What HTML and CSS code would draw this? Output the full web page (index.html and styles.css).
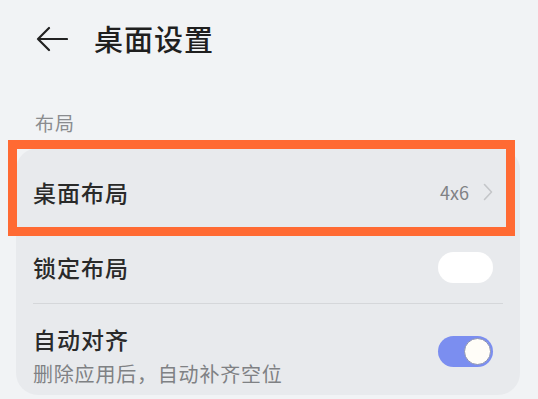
FILE: index.html
```html
<!DOCTYPE html>
<html lang="zh-CN">
<head>
<meta charset="utf-8">
<link rel="stylesheet" href="styles.css">
</head>
<body>
<div class="page">
  <header class="header">
    <svg class="back" width="32" height="26" viewBox="0 0 32 26">
      <path d="M13 2 L2 13 L13 24 M2 13 H31" fill="none" stroke="#222" stroke-width="2.2" stroke-linecap="round" stroke-linejoin="round"/>
    </svg>
    <h1 class="title">桌面设置</h1>
  </header>
  <div class="section-label">布局</div>
  <div class="card">
    <div class="row row-first">
      <span class="row-title">桌面布局</span>
      <span class="row-right">
        <span class="value">4x6</span>
        <svg class="chev" width="10" height="18" viewBox="0 0 10 18"><path d="M1.5 1.5 L8.5 9 L1.5 16.5" fill="none" stroke="#c4c6c9" stroke-width="1.6" stroke-linecap="round" stroke-linejoin="round"/></svg>
      </span>
      <div class="highlight"></div>
    </div>
    <div class="row row-second">
      <span class="row-title">锁定布局</span>
      <span class="switch off"></span>
    </div>
    <div class="divider"></div>
    <div class="row row-third">
      <div class="texts">
        <span class="row-title">自动对齐</span>
        <span class="subtitle">删除应用后，自动补齐空位</span>
      </div>
      <span class="switch on"><span class="knob"></span></span>
    </div>
  </div>
</div>
</body>
</html>
```
FILE: styles.css
```css
* { box-sizing: border-box; }
html, body { margin: 0; padding: 0; }
body {
  background: #f1f3f5;
  font-family: "Noto Sans CJK SC", "Noto Sans", sans-serif;
  width: 538px;
  height: 399px;
  overflow: hidden;
}
.page { padding: 0 18px 0 16px; }
.header {
  display: flex;
  align-items: center;
  height: 76px;
  padding-left: 20px;
}
.back { flex: none; margin-right: 26px; margin-top: 1px; }
.title {
  margin: 0;
  font-size: 29px;
  font-weight: 500;
  color: #1f1f1f;
  letter-spacing: 1px;
}
.section-label {
  margin-top: 32px;
  padding-left: 19px;
  height: 40px;
  font-size: 19px;
  color: #8a8c8f;
  line-height: 30px;
  letter-spacing: 1px;
}
.card {
  background: #e8eaed;
  border-radius: 22px;
  padding: 0 17px 0 17px;
  height: 247px;
}
.row {
  display: flex;
  align-items: center;
  justify-content: space-between;
}
.row-first {
  position: relative;
  height: 88px;
}
.row-second { height: 67px; padding-bottom: 5px; }
.row-third { height: 91px; align-items: flex-start; padding-top: 20px; }
.row-title {
  font-size: 23px;
  font-weight: 500;
  color: #2a2a2a;
  letter-spacing: 1px;
}
.row-right { display: flex; align-items: center; gap: 14px; margin-right: 10px; }
.value { font-size: 18px; color: #808285; }
.highlight {
  position: absolute;
  left: -25px;
  right: -12px;
  top: -8px;
  bottom: 0;
  border: 9px solid #ff6a33;
  pointer-events: none;
}
.divider { height: 1px; background: #d5d7da; }
.texts { display: flex; flex-direction: column; }
.texts .row-title { line-height: 30px; }
.subtitle { font-size: 20px; color: #7f8184; line-height: 30px; margin-top: 5px; letter-spacing: 0.8px; }
.switch {
  width: 55px;
  height: 31px;
  border-radius: 16px;
  margin-right: 10px;
  position: relative;
  flex: none;
}
.switch.off { background: #ffffff; }
.switch.on { background: #7b8ef0; margin-top: 12px; }
.knob {
  position: absolute;
  right: 2px;
  top: 2px;
  width: 27px;
  height: 27px;
  border-radius: 50%;
  background: #fffdf8;
  border: 1px solid #8e94b0;
}
```
